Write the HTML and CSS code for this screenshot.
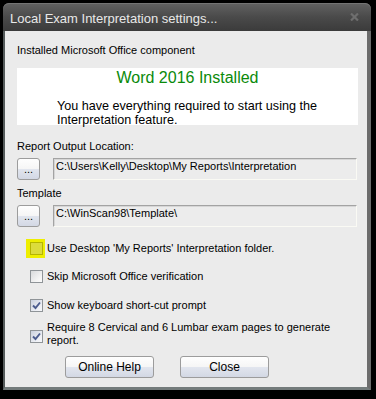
FILE: index.html
```html
<!DOCTYPE html>
<html lang="en">
<head>
  <meta charset="UTF-8">
  <title>Local Exam Interpretation settings...</title>
  <link rel="stylesheet" href="styles.css">
</head>
<body>
  <div class="window">
    <!-- barra de título -->
    <div class="titlebar">
      <span class="title">Local Exam Interpretation settings...</span>
      <svg class="close-x" width="9" height="8" viewBox="0 0 9 8">
        <path d="M1 0.5 L8 7.5 M8 0.5 L1 7.5" stroke="#6e6e6e" stroke-width="2.2" fill="none"/>
      </svg>
    </div>

    <div class="client">
      <div class="label">Installed Microsoft Office component</div>

      <div class="status">
        <div class="status-title">Word 2016 Installed</div>
        <div class="status-text">You have everything required to start using the<br>Interpretation feature.</div>
      </div>

      <div class="label section">Report Output Location:</div>
      <div class="path-row">
        <div class="browse">...</div>
        <div class="path-field">C:\Users\Kelly\Desktop\My Reports\Interpretation</div>
      </div>

      <div class="label section-small">Template</div>
      <div class="path-row">
        <div class="browse">...</div>
        <div class="path-field">C:\WinScan98\Template\</div>
      </div>

      <div class="options">
        <div class="check-row">
          <span class="check marked"></span>
          <span class="check-label">Use Desktop 'My Reports' Interpretation folder.</span>
        </div>
        <div class="check-row">
          <span class="check"></span>
          <span class="check-label">Skip Microsoft Office verification</span>
        </div>
        <div class="check-row">
          <span class="check checked">
            <svg width="11" height="11" viewBox="0 0 11 11"><path d="M2 5.5 L4.5 8 L9 2.5" stroke="#4b5c8e" stroke-width="1.9" fill="none"/></svg>
          </span>
          <span class="check-label">Show keyboard short-cut prompt</span>
        </div>
        <div class="check-row tall">
          <span class="check checked">
            <svg width="11" height="11" viewBox="0 0 11 11"><path d="M2 5.5 L4.5 8 L9 2.5" stroke="#4b5c8e" stroke-width="1.9" fill="none"/></svg>
          </span>
          <span class="check-label wrap">Require 8 Cervical and 6 Lumbar exam pages to generate report.</span>
        </div>
      </div>

      <div class="buttons">
        <button class="btn">Online Help</button>
        <button class="btn">Close</button>
      </div>
    </div>
  </div>
</body>
</html>
```

FILE: styles.css
```css
/* fundo preto em volta da janela */
html, body {
  margin: 0;
  padding: 0;
  background: #000;
  font-family: "Liberation Sans", Arial, sans-serif;
  font-size: 11px;
  color: #000;
}

.window {
  margin: 3px 0 0 3px;
  width: 368px;
  display: flex;
  flex-direction: column;
}

/* barra de título escura com cantos arredondados */
.titlebar {
  height: 28px;
  box-sizing: border-box;
  padding: 3px 12px 0 7px;
  display: flex;
  align-items: center;
  justify-content: space-between;
  border-radius: 6px 6px 0 0;
  background: linear-gradient(#626262, #4a4a4a 50%, #3b3b3b);
  box-shadow: inset 0 1px 0 #747474;
}

.title {
  font-size: 13px;
  color: #e8e8e8;
}

.close-x {
  margin-bottom: 4px;
}

/* área cinza do formulário */
.client {
  height: 359px;
  box-sizing: border-box;
  padding: 13px 9px 0 12px;
  background: #ebebeb;
  border-left: 2px solid #555b5b;
  border-right: 4px solid #6c6c6c;
  border-bottom: 3px solid #737b7b;
}

.label {
  line-height: 13px;
}
.label.section { margin-top: 15px; }
.label.section-small { margin-top: 7px; }

/* caixa branca com o status do Word */
.status {
  margin-top: 11px;
  height: 57px;
  background: #fff;
}

.status-title {
  font-size: 16px;
  line-height: 19px;
  text-align: center;
  color: #0a8a0a;
}

.status-text {
  margin-top: 12px;
  padding-left: 40px;
  font-size: 12.6px;
  line-height: 14px;
}

.path-row {
  margin-top: 5px;
  height: 22px;
  display: flex;
  gap: 13px;
  padding-right: 1px;
}

/* botões estilo Windows */
.browse,
.btn {
  font-family: inherit;
  color: #000;
  border: 1px solid #9c9c9c;
  border-radius: 3px;
  background: linear-gradient(#fefefe, #f6f6f6 48%, #e1e5ee 52%, #d3d8e4);
  padding: 0;
  cursor: default;
}

.browse {
  width: 23px;
  height: 22px;
  box-sizing: border-box;
  flex: none;
  font-size: 11px;
  line-height: 13px;
  text-align: center;
  padding-top: 4px;
}

.path-field {
  flex: 1;
  box-sizing: border-box;
  padding: 1px 0 0 2px;
  line-height: 13px;
  background: #ececec;
  border-top: 1px solid #a3a3a3;
  border-left: 1px solid #a3a3a3;
  border-bottom: 1px solid #fafaf4;
  border-right: 1px solid #fafaf4;
  box-shadow: inset 1px 1px 0 #d6d6d6;
}

/* caixas de seleção */
.options {
  padding-left: 13px;
  margin-top: 15px;
}

.check-row {
  display: flex;
  align-items: center;
  gap: 4px;
  line-height: 13px;
  margin-bottom: 15px;
}
.check-row:nth-child(2) { margin-bottom: 16px; }
.check-row.tall {
  margin-top: -6px;
  margin-bottom: 0;
}
.check-row.tall .check { margin-top: 4px; }

.check {
  width: 13px;
  height: 13px;
  box-sizing: border-box;
  flex: none;
  border: 1px solid #8f9498;
  background: linear-gradient(135deg, #d8dadc, #f4f4f4 70%, #fbfbfb);
  display: flex;
  align-items: center;
  justify-content: center;
}

.check.checked {
  background: linear-gradient(135deg, #c9d0de, #eef0f5 70%, #f6f7fa);
}

/* destaque amarelo de marca-texto */
.check.marked {
  border-color: #b5b500;
  background: #dcdc3c;
  box-shadow: -1px 0 0 3px #eeee00;
}

.check-label.wrap {
  width: 290px;
}

.buttons {
  margin: 9px 0 0 48px;
  display: flex;
  gap: 26px;
}

.btn {
  width: 89px;
  height: 22px;
  font-size: 12px;
}
```
